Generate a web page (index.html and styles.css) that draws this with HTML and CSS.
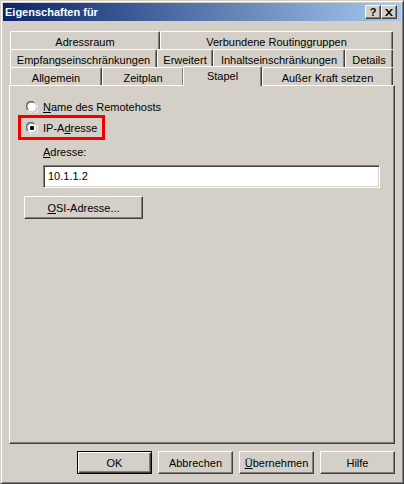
FILE: index.html
```html
<!DOCTYPE html>
<html>
<head>
<meta charset="utf-8">
<link rel="stylesheet" href="styles.css">
</head>
<body>
<div class="window">
  <div class="titlebar">
    <span class="title">Eigenschaften für</span>
    <div class="tbtns">
      <span class="tbtn help">?</span>
      <span class="tbtn close"><svg width="8" height="7" viewBox="0 0 8 7"><path d="M0 0h2l2 2.5L6 0h2L5 3.5 8 7H6L4 4.5 2 7H0l3-3.5z" fill="#000"/></svg></span>
    </div>
  </div>
  <div class="client">
    <div class="tabs">
      <div class="row">
        <div class="tab t150">Adressraum</div>
        <div class="tab t233">Verbundene Routinggruppen</div>
      </div>
      <div class="row">
        <div class="tab t147">Empfangseinschränkungen</div>
        <div class="tab t56">Erweitert</div>
        <div class="tab t132">Inhaltseinschränkungen</div>
        <div class="tab t48">Details</div>
      </div>
      <div class="row front">
        <div class="tab t92">Allgemein</div>
        <div class="tab t82">Zeitplan</div>
        <div class="tab sel">Stapel</div>
        <div class="tab t131">Außer Kraft setzen</div>
      </div>
    </div>
    <div class="panel">
      <div class="radio-row first">
        <span class="radio"><svg width="12" height="12" viewBox="0 0 12 12"><path d="M8 1.5A5 5 0 0 0 1 9" fill="none" stroke="#808080"/><path d="M11 4A5 5 0 0 1 3.5 11" fill="none" stroke="#fff"/><circle cx="6" cy="6" r="4.5" fill="#fff"/><path d="M8.3 2.1A4.3 4.3 0 0 0 2 8.5" fill="none" stroke="#404040"/><path d="M10 4.2A4.3 4.3 0 0 1 4 10" fill="none" stroke="#D4D0C8"/></svg></span>
        <span class="lbl"><u>N</u>ame des Remotehosts</span>
      </div>
      <div class="mark">
        <div class="radio-row">
          <span class="radio"><svg width="12" height="12" viewBox="0 0 12 12"><path d="M8 1.5A5 5 0 0 0 1 9" fill="none" stroke="#808080"/><path d="M11 4A5 5 0 0 1 3.5 11" fill="none" stroke="#fff"/><circle cx="6" cy="6" r="4.5" fill="#fff"/><path d="M8.3 2.1A4.3 4.3 0 0 0 2 8.5" fill="none" stroke="#404040"/><path d="M10 4.2A4.3 4.3 0 0 1 4 10" fill="none" stroke="#D4D0C8"/><rect x="4" y="4" width="4" height="4" rx="1" fill="#000"/></svg></span>
          <span class="lbl">IP-A<u>d</u>resse</span>
        </div>
      </div>
      <div class="field-label"><u>A</u>dresse:</div>
      <div class="textbox">10.1.1.2</div>
      <div class="btn osi"><u>O</u>SI-Adresse...</div>
    </div>
    <div class="buttons">
      <div class="btn default">OK</div>
      <div class="btn">Abbrechen</div>
      <div class="btn"><u>Ü</u>bernehmen</div>
      <div class="btn">Hilfe</div>
    </div>
  </div>
</div>
</body>
</html>
```

FILE: styles.css
```css
* { box-sizing: border-box; }
html, body { margin: 0; padding: 0; background: #D4D0C8; }
body { font-family: "Liberation Sans", Arial, sans-serif; font-size: 11px; color: #000; }

.window {
  width: 404px;
  height: 484px;
  background: #D4D0C8;
  border: 1px solid;
  border-color: #D4D0C8 #404040 #404040 #D4D0C8;
  box-shadow: inset 1px 1px #fff, inset -1px -1px #808080;
  padding: 2px;
  display: flex;
  flex-direction: column;
}

.titlebar {
  height: 18px;
  background: linear-gradient(to right, #0A246A, #A6CAF0);
  display: flex;
  align-items: center;
  justify-content: space-between;
  padding: 0 4px 0 2px;
}
.title { color: #fff; font-weight: bold; font-size: 11px; }
.tbtns { display: flex; }
.tbtn {
  width: 16px;
  height: 14px;
  background: #D4D0C8;
  border: 1px solid;
  border-color: #fff #404040 #404040 #fff;
  box-shadow: inset -1px -1px #808080;
  display: flex;
  align-items: center;
  justify-content: center;
  font-weight: bold;
  font-size: 11px;
  line-height: 1;
}

.client {
  flex: 1;
  display: flex;
  flex-direction: column;
  padding: 10px 6px 0 6px;
}

.tabs { display: flex; flex-direction: column; padding-left: 1px; }
.row { display: flex; height: 18px; align-items: stretch; }
.row.front { position: relative; z-index: 2; align-items: flex-end; }

.tab {
  height: 100%;
  background: #D4D0C8;
  border-top: 1px solid #fff;
  border-left: 1px solid #fff;
  border-right: 1px solid #404040;
  box-shadow: inset -1px 0 #808080;
  border-radius: 2px 2px 0 0;
  display: flex;
  align-items: center;
  justify-content: center;
  white-space: nowrap;
  padding-top: 2px;
}
.t150 { width: 150px; }
.t233 { width: 233px; }
.t147 { width: 147px; }
.t56 { width: 56px; }
.t132 { width: 132px; }
.t48 { width: 48px; }
.t92 { width: 92px; }
.t82 { width: 82px; }
.t131 { width: 131px; }
.tab.sel {
  width: 79px;
  height: 20px;
  margin: 0 0 -1px -1px;
  position: relative;
  z-index: 3;
  padding-top: 0;
  padding-bottom: 2px;
}

.panel {
  height: 359px;
  background: #D4D0C8;
  border-top: 1px solid #fff;
  border-left: 1px solid #fff;
  border-right: 1px solid #404040;
  border-bottom: 1px solid #404040;
  box-shadow: inset -1px -1px #808080;
  display: flex;
  flex-direction: column;
  align-items: flex-start;
  padding: 14px 0 0 0;
}

.radio-row { display: flex; align-items: center; height: 13px; }
.radio-row.first { margin-left: 16px; }
.radio { width: 12px; height: 12px; display: block; }
.radio svg { display: block; }
.lbl { margin-left: 5px; white-space: nowrap; }

.mark {
  margin: 2px 0 0 8px;
  width: 87px;
  height: 25px;
  border: 3px solid #F00000;
  display: flex;
  align-items: center;
  padding-left: 5px;
}

.field-label { margin: 5px 0 0 33px; height: 14px; line-height: 14px; }

.textbox {
  margin: 6px 0 0 33px;
  width: 337px;
  height: 23px;
  background: #fff;
  border: 1px solid;
  border-color: #808080 #fff #fff #808080;
  box-shadow: inset 1px 1px #404040, inset -1px -1px #D4D0C8;
  padding: 3px 0 0 4px;
  line-height: 15px;
}

.btn {
  width: 75px;
  height: 23px;
  background: #D4D0C8;
  border: 1px solid;
  border-color: #fff #404040 #404040 #fff;
  box-shadow: inset -1px -1px #808080;
  display: flex;
  align-items: center;
  justify-content: center;
  white-space: nowrap;
}
.btn.osi { width: 119px; margin: 8px 0 0 14px; }
.btn.default {
  border: 1px solid #000;
  box-shadow: inset 1px 1px #fff, inset -1px -1px #404040, inset -2px -2px #808080;
}

.buttons {
  display: flex;
  justify-content: flex-end;
  gap: 6px;
  margin-top: 7px;
}
```
